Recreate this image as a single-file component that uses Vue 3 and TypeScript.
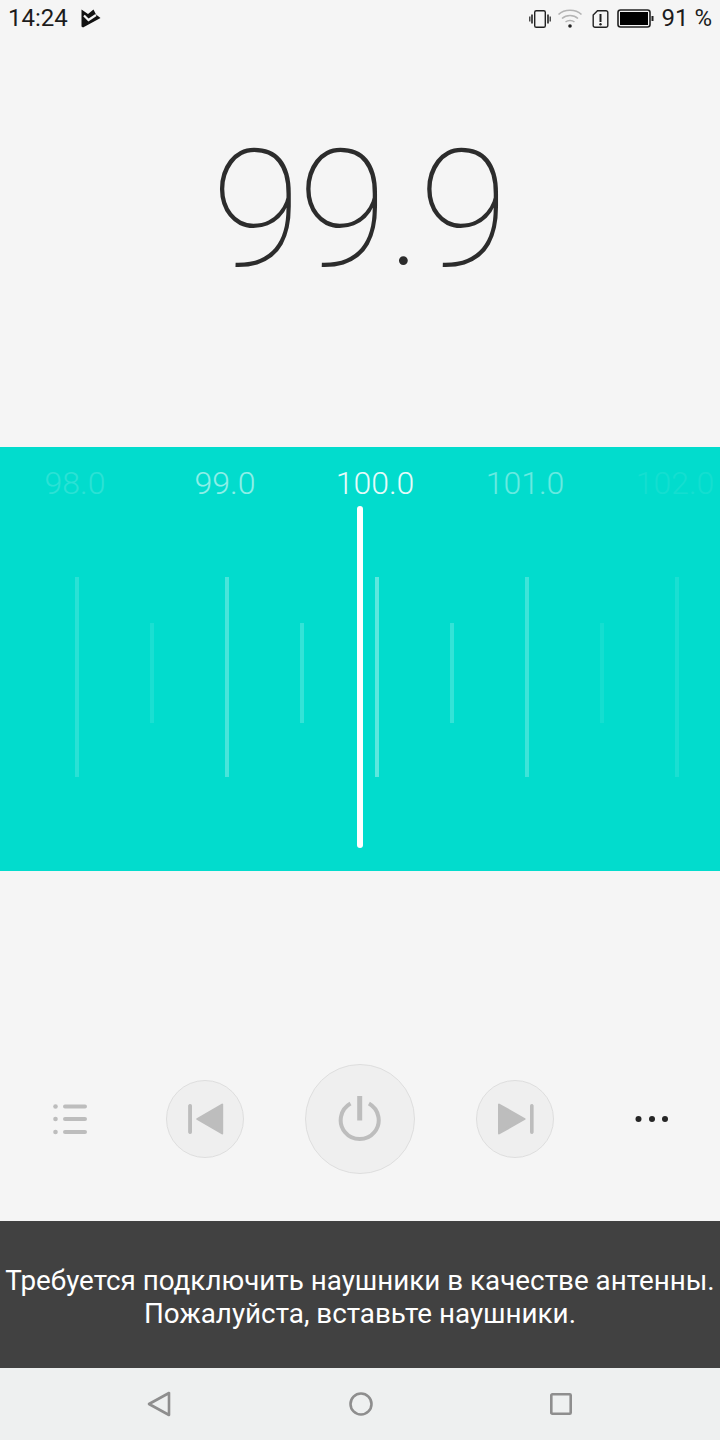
<script setup lang="ts">
const labels = [
  { text: '98.0', alpha: 0.16 },
  { text: '99.0', alpha: 0.55 },
  { text: '100.0', alpha: 0.9 },
  { text: '101.0', alpha: 0.4 },
  { text: '102.0', alpha: 0.07 },
]

const ticks = [
  { long: true, alpha: 0.16 },
  { long: false, alpha: 0.1 },
  { long: true, alpha: 0.28 },
  { long: false, alpha: 0.2 },
  { long: true, alpha: 0.36 },
  { long: false, alpha: 0.2 },
  { long: true, alpha: 0.24 },
  { long: false, alpha: 0.08 },
  { long: true, alpha: 0.1 },
]
</script>

<template>
  <div class="screen">
    <header class="status">
      <div class="status-left">
        <span>14:24</span>
        <svg class="notif" width="20" height="20" viewBox="0 0 20 20">
          <path d="M.5 .5 L7 5 L12.500 .5 L15 5.500 L19.500 9 L2 18.500 L.5 17.500 Z" fill="#111" />
          <path d="M3 6.500 L7.500 11 L15 6" fill="none" stroke="#f5f5f5" stroke-width="2.200" />
        </svg>
      </div>
      <div class="status-right">
        <svg width="22" height="20" viewBox="0 0 22 20" fill="none" stroke="#222">
          <rect x="5.700" y="1.700" width="10.600" height="16.600" rx="1.600" stroke-width="1.400" />
          <path d="M3 5.500v9M19 5.500v9" stroke-width="1.600" />
          <path d="M.8 7.500v5M21.200 7.500v5" stroke-width="1.200" />
        </svg>
        <svg width="26" height="20" viewBox="0 0 26 20" fill="none" stroke="#b4b4b4" stroke-width="1.600">
          <path d="M1.500 5.500C7.500 -.2 18.500 -.2 24.500 5.500" />
          <path d="M5 9.500c4.500-4 11.500-4 16 0" />
          <path d="M8.500 13c2.500-2 6.500-2 9 0" />
          <circle cx="13" cy="17" r="1.800" fill="#222" stroke="none" />
        </svg>
        <svg class="sim" width="17" height="20" viewBox="0 0 17 20" fill="none">
          <path d="M5.500 1.700H14a1.800 1.800 0 0 1 1.800 1.800v13a1.800 1.800 0 0 1-1.800 1.800H3a1.800 1.800 0 0 1-1.800-1.800V6Z" stroke="#222" stroke-width="1.400" />
          <path d="M8.500 5v8" stroke="#222" stroke-width="2" />
          <circle cx="8.500" cy="15.200" r="1.200" fill="#222" />
        </svg>
        <svg class="battery" width="37" height="20" viewBox="0 0 37 20">
          <rect x="1" y="1" width="32" height="17" rx="2.500" fill="none" stroke="#222" stroke-width="1.600" />
          <rect x="3" y="3" width="28" height="13" fill="#000" />
          <rect x="34.500" y="7" width="2" height="5" fill="#222" />
        </svg>
        <span class="pct">91 %</span>
      </div>
    </header>

    <section class="freq">
      <div class="freq-value">99<span class="dot">.</span>9</div>
    </section>

    <section class="band">
      <div class="labels">
        <span v-for="l in labels" :key="l.text" class="label" :style="{ opacity: l.alpha }">{{ l.text }}</span>
      </div>
      <div class="ticks">
        <i v-for="(t, i) in ticks" :key="i" class="tick" :class="{ long: t.long }" :style="{ opacity: t.alpha }" />
      </div>
      <div class="needle" />
    </section>

    <section class="controls">
      <svg class="list" width="34" height="32" viewBox="0 0 34 32" fill="#bdbdbd">
        <circle cx="2.500" cy="3.500" r="2.300" />
        <circle cx="2.500" cy="16" r="2.300" />
        <circle cx="2.500" cy="29" r="2.300" />
        <rect x="10" y="1.500" width="24" height="4" rx="2" />
        <rect x="10" y="14" width="24" height="4" rx="2" />
        <rect x="10" y="27" width="24" height="4" rx="2" />
      </svg>
      <button class="round">
        <svg width="38" height="32" viewBox="0 0 38 32" fill="#bdbdbd" stroke="#bdbdbd" stroke-linejoin="round">
          <rect x="2.700" y="1.500" width="2.800" height="29" rx="1" stroke-width="1" />
          <path d="M36.200 1.500V30.500L11.200 16Z" stroke-width="2" />
        </svg>
      </button>
      <button class="round big">
        <svg width="44" height="46" viewBox="0 0 44 46" fill="none" stroke="#bdbdbd">
          <path d="M21.700 0V24.500" stroke-width="5" />
          <path d="M12.500 7.500a19 19 0 1 0 18.400 0" stroke-width="4" />
        </svg>
      </button>
      <button class="round">
        <svg width="38" height="32" viewBox="0 0 38 32" fill="#bdbdbd" stroke="#bdbdbd" stroke-linejoin="round">
          <rect x="34.500" y="1.500" width="2.600" height="29" rx="1" stroke-width="1" />
          <path d="M3 1.500V30.500L28.600 16Z" stroke-width="2" />
        </svg>
      </button>
      <svg class="more" width="34" height="8" viewBox="0 0 34 8" fill="#262626">
        <circle cx="3.500" cy="4" r="3" />
        <circle cx="17" cy="4" r="3" />
        <circle cx="30" cy="4" r="3" />
      </svg>
    </section>

    <div class="toast">Требуется подключить наушники в качестве антенны.<br />Пожалуйста, вставьте наушники.</div>

    <nav class="nav">
      <svg width="24" height="26" viewBox="0 0 24 26" fill="none" stroke="#8e8e8e" stroke-width="2.600" stroke-linejoin="round">
        <path d="M22 2V24L2 13Z" />
      </svg>
      <svg width="24" height="24" viewBox="0 0 24 24" fill="none" stroke="#8e8e8e" stroke-width="2.600">
        <circle cx="12" cy="12" r="10.500" />
      </svg>
      <svg width="22" height="22" viewBox="0 0 22 22" fill="none" stroke="#8e8e8e" stroke-width="2.600" stroke-linejoin="round">
        <rect x="1.300" y="1.300" width="19.400" height="19.400" rx="1" />
      </svg>
    </nav>
  </div>
</template>

<style scoped>
.screen {
  width: 720px;
  height: 1440px;
  display: flex;
  flex-direction: column;
  background: #f5f5f5;
  font-family: Roboto, "Noto Sans", sans-serif;
  overflow: hidden;
}
.status {
  height: 37px;
  padding: 0 8px;
  display: flex;
  justify-content: space-between;
  align-items: center;
  font-size: 24px;
  color: #1c1c1c;
  line-height: 37px;
}
.status-left { display: flex; align-items: center; gap: 13px; }
.status-right { display: flex; align-items: center; gap: 6px; }
.sim { margin-left: 3px; }
.battery { margin-left: 2px; }
.pct { margin-left: 1px; }
.freq {
  height: 410px;
  display: flex;
  justify-content: center;
}
.freq-value {
  margin-top: 78px;
  padding-right: 3px;
  font-weight: 100;
  font-size: 163px;
  letter-spacing: -3px;
  line-height: 190px;
  color: #2c2c2c;
}
.dot { margin-left: 3px; }
.band {
  position: relative;
  height: 424px;
  background: #02dccd;
}
.labels {
  display: grid;
  grid-template-columns: repeat(5, 150px);
  padding-top: 17px;
  height: 38px;
  font-size: 32px;
  font-weight: 300;
  line-height: 38px;
  color: #fff;
  text-align: center;
}
.ticks {
  margin-top: 75px;
  height: 200px;
  padding-left: 75px;
  display: flex;
  align-items: center;
  gap: 71px;
}
.tick {
  width: 4px;
  height: 100px;
  margin-bottom: 8px;
  background: #fff;
}
.tick.long { height: 200px; margin-bottom: 0; }
.needle {
  position: absolute;
  left: 357px;
  top: 59px;
  width: 6px;
  height: 342px;
  border-radius: 3px;
  background: #fff;
}
.controls {
  height: 350px;
  padding: 146px 0 0 53px;
  display: flex;
  align-items: center;
  box-sizing: border-box;
}
.list { margin-right: 79px; }
.more { margin-left: 81px; }
.round {
  width: 78px;
  height: 78px;
  padding: 0;
  border: 1.500px solid #dedede;
  border-radius: 50%;
  background: #efefef;
  display: flex;
  align-items: center;
  justify-content: center;
}
.round.big { width: 110px; height: 110px; margin: 0 61px; }
.toast {
  height: 147px;
  box-sizing: border-box;
  padding-top: 4px;
  display: flex;
  flex-direction: column;
  justify-content: center;
  background: #414141;
  color: #fff;
  font-size: 27.800px;
  line-height: 33px;
  text-align: center;
  white-space: nowrap;
}
.nav {
  height: 72px;
  padding: 0 148px 0 147px;
  display: flex;
  justify-content: space-between;
  align-items: center;
  background: #eef0f0;
}
</style>
